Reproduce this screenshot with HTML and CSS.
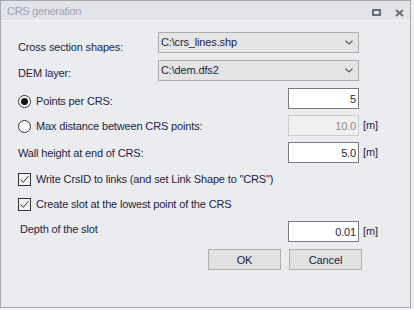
FILE: index.html
```html
<!DOCTYPE html>
<html lang="en">
<head>
    <meta charset="UTF-8">
    <title>CRS generation</title>
    <link rel="stylesheet" href="styles.css">
</head>
<body>
    <div class="window">
        <div class="titlebar">
            <span class="title">CRS generation</span>
            <div class="title-buttons">
                <svg width="9" height="7" viewBox="0 0 9 7"><path fill="#6b6e7a" fill-rule="evenodd" d="M0 0H9V7H0Z M2 2V5H7V2Z"/></svg>
                <svg width="9" height="8" viewBox="0 0 9 8"><path d="M1 1L8 7M8 1L1 7" stroke="#6b6e7a" stroke-width="2" fill="none"/></svg>
            </div>
        </div>

        <form class="dialog">
            <div class="row">
                <label class="label t9">Cross section shapes:</label>
                <div class="combo">
                    <span>C:\crs_lines.shp</span>
                    <svg width="8" height="5" viewBox="0 0 8 5"><path d="M0.5 0.8L4 4L7.5 0.8" stroke="#5c5c5c" stroke-width="1.2" fill="none"/></svg>
                </div>
            </div>
            <div class="row">
                <label class="label t7">DEM layer:</label>
                <div class="combo">
                    <span>C:\dem.dfs2</span>
                    <svg width="8" height="5" viewBox="0 0 8 5"><path d="M0.5 0.8L4 4L7.5 0.8" stroke="#5c5c5c" stroke-width="1.2" fill="none"/></svg>
                </div>
            </div>
            <div class="row">
                <label class="option t7"><span class="radio on"></span>Points per CRS:</label>
                <input class="field" type="text" value="5">
                <span class="unit"></span>
            </div>
            <div class="row">
                <label class="option t5"><span class="radio"></span>Max distance between CRS points:</label>
                <input class="field" type="text" value="10.0" disabled>
                <span class="unit">[m]</span>
            </div>
            <div class="row">
                <label class="label t5">Wall height at end of CRS:</label>
                <input class="field" type="text" value="5.0">
                <span class="unit">[m]</span>
            </div>
            <div class="row">
                <label class="option t3"><span class="check"><svg width="11" height="11" viewBox="0 0 11 11"><path d="M1.5 5.5L4.3 8.3L9.5 2" stroke="#333" stroke-width="1" fill="none"/></svg></span>Write CrsID to links (and set Link Shape to "CRS")</label>
            </div>
            <div class="row">
                <label class="option t3"><span class="check"><svg width="11" height="11" viewBox="0 0 11 11"><path d="M1.5 5.5L4.3 8.3L9.5 2" stroke="#333" stroke-width="1" fill="none"/></svg></span>Create slot at the lowest point of the CRS</label>
            </div>
            <div class="row">
                <label class="label t2 indent">Depth of the slot</label>
                <input class="field" type="text" value="0.01">
                <span class="unit">[m]</span>
            </div>
            <div class="actions">
                <button type="submit">OK</button>
                <button type="button">Cancel</button>
            </div>
        </form>
    </div>
</body>
</html>
```

FILE: styles.css
```css
body {
    margin: 0;
    background: #f0f0f2;
    font-family: "Liberation Sans", Arial, sans-serif;
    font-size: 11px;
    letter-spacing: -0.15px;
    color: #1f1e3d;
}
.window {
    width: 411px;
    height: 308px;
    box-sizing: border-box;
    border: 1px solid #a6a8b2;
    background: #ebecf0;
}
.titlebar {
    height: 19px;
    display: flex;
    align-items: flex-start;
    padding-left: 6px;
    background: #e3e4e9;
    border-bottom: 1px solid #f6f6f8;
}
.title {
    margin-top: 4px;
    line-height: 13px;
    color: #a0a3b8;
    letter-spacing: -0.3px;
}
.title-buttons {
    display: flex;
    gap: 14px;
    margin: 8px 6px 0 auto;
}
.dialog {
    display: grid;
    grid-template-rows: 28px 28px 27px 27px 28px 25px 26px 28px 21px;
    padding: 11px 0 0 17px;
    margin: 0;
}
.row {
    display: flex;
    align-items: flex-start;
    width: 367px;
}
.label {
    flex: 1;
    line-height: 13px;
}
.indent {
    padding-left: 2px;
}
.t9 { margin-top: 9px; }
.t7 { margin-top: 7px; }
.t5 { margin-top: 5px; }
.t3 { margin-top: 3px; }
.t2 { margin-top: 2px; }
.combo {
    width: 201px;
    height: 21px;
    box-sizing: border-box;
    display: flex;
    align-items: center;
    margin-right: 26px;
    padding: 0 5px 0 2px;
    line-height: 19px;
    border: 1px solid #adadad;
    background: #e5e5e5;
}
.combo svg {
    margin-left: auto;
}
.field {
    width: 71px;
    height: 21px;
    box-sizing: border-box;
    margin: 0;
    padding: 0 2px;
    border: 1px solid #7a7a7a;
    border-radius: 0;
    background: #fff;
    font: inherit;
    letter-spacing: inherit;
    line-height: 19px;
    color: inherit;
    text-align: right;
    outline: none;
}
.field:disabled {
    background: #f0f0f0;
    border-color: #cccccc;
    color: #8c8c8c;
}
.unit {
    width: 26px;
    box-sizing: border-box;
    padding-left: 4px;
    line-height: 21px;
}
.option {
    flex: 1;
    display: flex;
    align-items: center;
    gap: 5px;
    line-height: 13px;
}
.radio {
    width: 13px;
    height: 13px;
    box-sizing: border-box;
    display: flex;
    align-items: center;
    justify-content: center;
    border: 1px solid #333;
    border-radius: 50%;
    background: #fff;
}
.radio.on::after {
    content: "";
    width: 7px;
    height: 7px;
    border-radius: 50%;
    background: #111;
}
.check {
    width: 13px;
    height: 13px;
    box-sizing: border-box;
    display: flex;
    border: 1px solid #333;
    background: #f3f3f5;
}
.actions {
    display: flex;
    justify-content: flex-end;
    gap: 8px;
    width: 367px;
    box-sizing: border-box;
    padding-right: 23px;
}
.actions button {
    width: 73px;
    height: 21px;
    padding: 0;
    border: 1px solid #adadad;
    border-radius: 0;
    background: #e1e1e1;
    font: inherit;
    letter-spacing: inherit;
    color: inherit;
}
```
